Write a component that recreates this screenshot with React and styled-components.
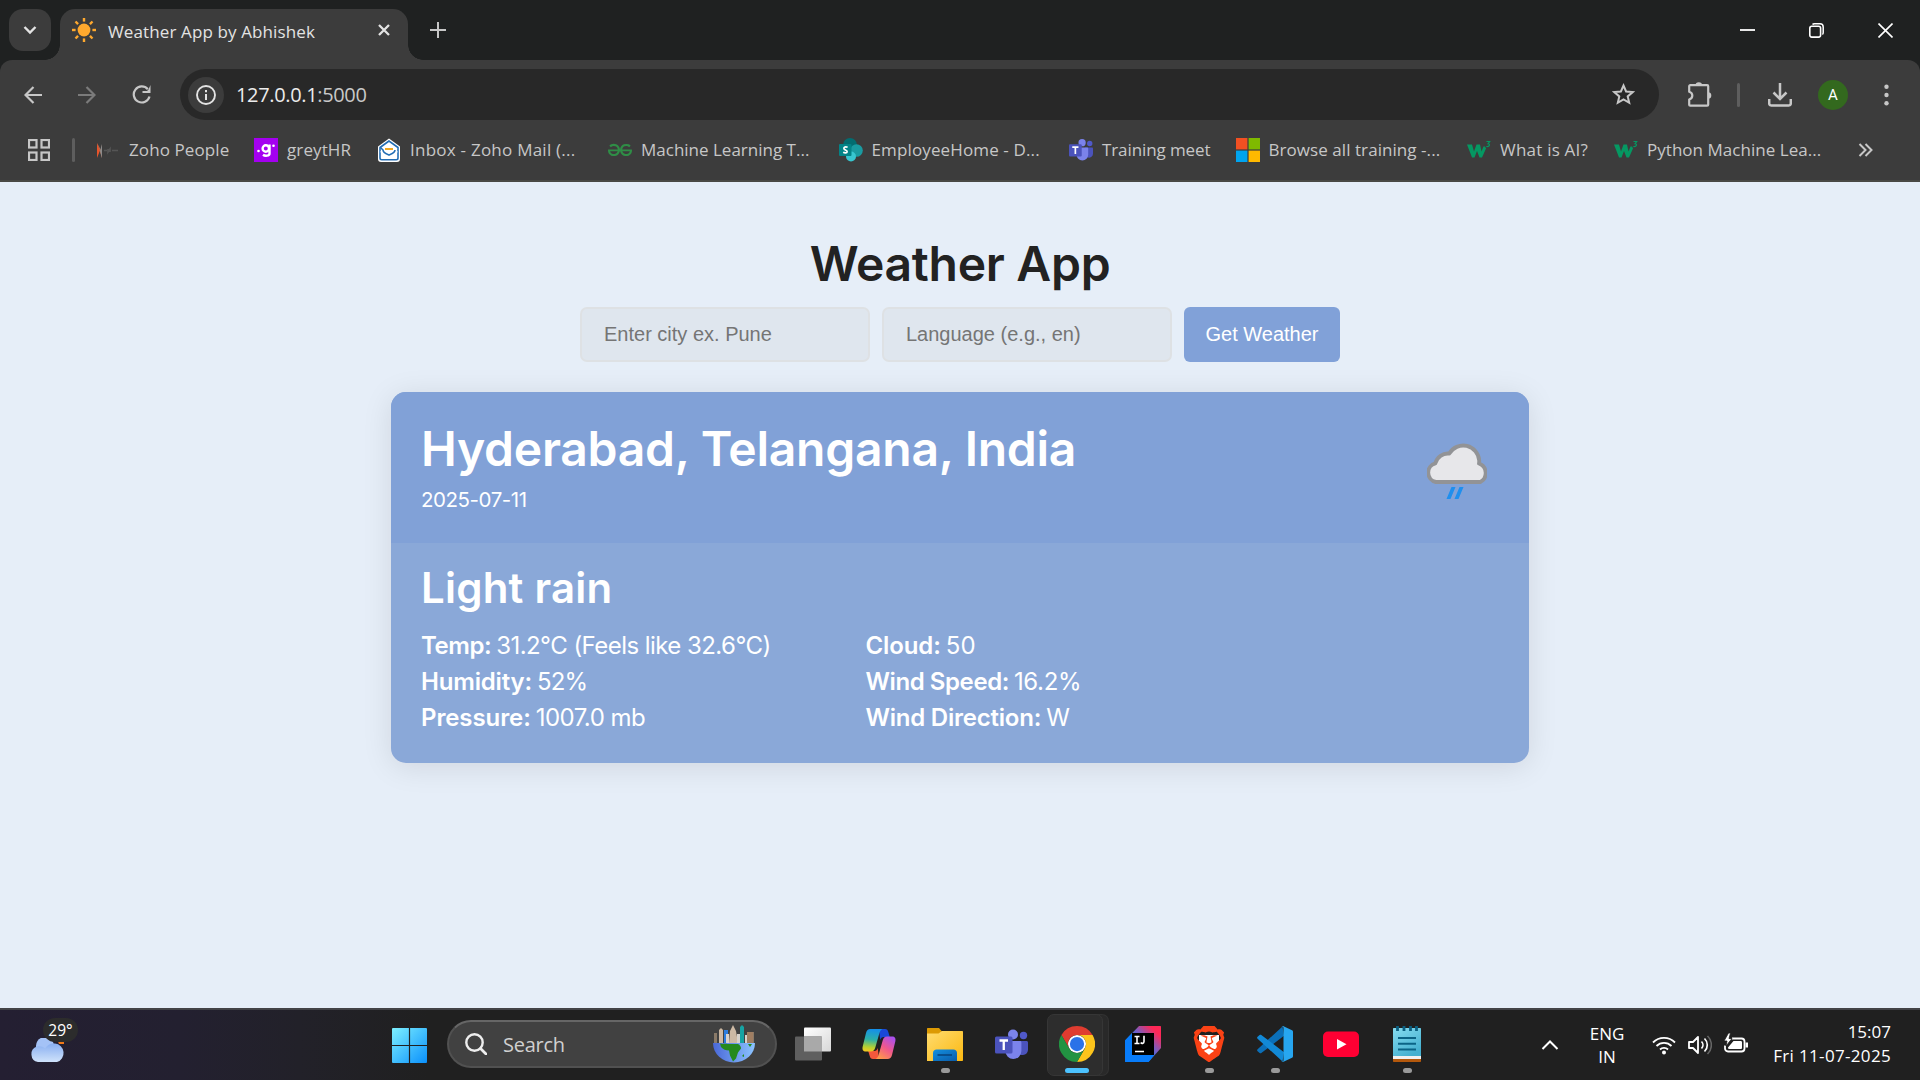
import React from "react";
import styled, { createGlobalStyle } from "styled-components";
import { SiBrave, SiGeeksforgeeks } from "react-icons/si";

const Global = createGlobalStyle`
  * { box-sizing: border-box; }
  body { margin: 0; background: #e6eef8; overflow: hidden; }
`;
const ui = `"Open Sans", "Noto Sans", sans-serif`;

const Screen = styled.div`
  width: 1920px; height: 1080px; display: flex; flex-direction: column;
  font-family: ${ui}; overflow: hidden;
`;
const Text = styled.span`
  white-space: pre; letter-spacing: ${(p) => p.$ls || 0}px;
`;

/* ---------- browser ---------- */
const TabStrip = styled.div`
  height: 60px; background: #1f2121; display: flex; align-items: flex-end; flex: none;
`;
const TabSearch = styled.div`
  width: 42px; height: 42px; margin: 0 9px 9px; border-radius: 14px; background: #3c3c3c;
  display: flex; align-items: center; justify-content: center;
`;
const Tab = styled.div`
  position: relative; width: 348px; height: 51px; background: #3c3c3c; border-radius: 15px 15px 0 0;
  display: flex; align-items: center; padding: 0 17px 9px 12px; color: #e3e3e3; font-size: 17px;
  &::before, &::after {
    content: ""; position: absolute; bottom: 0; width: 15px; height: 15px;
  }
  &::before { left: -15px; background: radial-gradient(circle at 0 0, transparent 14.5px, #3c3c3c 15px); }
  &::after { right: -15px; background: radial-gradient(circle at 100% 0, transparent 14.5px, #3c3c3c 15px); }
  ${Text} { margin-left: 12px; flex: 1; line-height: 24px; padding-top: 3px; }
`;
const NewTab = styled.div`
  height: 60px; display: flex; align-items: center; flex: 1; padding-left: 22px;
`;
const WindowButton = styled.div`
  width: 69px; height: 60px; display: flex; align-items: center; justify-content: center;
`;
const Chrome = styled.div`
  background: #1f2121; height: 122px; flex: none;
`;
const ChromeInner = styled.div`
  height: 122px; background: #3c3c3c; border-radius: 12px 12px 0 0; border-bottom: 2px solid #494945;
`;
const Toolbar = styled.div`
  height: 69px; padding: 9px 0; display: flex; align-items: center;
`;
const NavButton = styled.div`
  width: 54px; height: 51px; display: flex; align-items: center; justify-content: center;
  &:first-child { margin-left: 6px; }
`;
const AddressBar = styled.div`
  margin-left: 12px; width: 1479px; height: 51px; border-radius: 26px; background: #282828;
  display: flex; align-items: center; padding: 0 24px 0 8px; color: #ececec; font-size: 20px;
  ${Text} { line-height: 28px; }
`;
const Url = styled.div`
  flex: 1; margin-left: 12px; display: flex; color: #ececec;
  ${Text} + ${Text} { color: #c9c9c9; }
`;
const InfoCircle = styled.div`
  width: 36px; height: 36px; border-radius: 50%; background: #3c3c3c;
  display: flex; align-items: center; justify-content: center;
`;
const Tools = styled.div`
  display: flex; align-items: center; padding-left: 27px;
`;
const Divider = styled.div`
  width: 3px; height: 24px; border-radius: 2px; background: #5e5e5e; margin: ${(p) => p.$m};
`;
const Avatar = styled.div`
  width: 30px; height: 30px; border-radius: 50%; background: #33691e; color: #fff; margin: 0 36px 0 26px;
  font: 15px/31px Roboto, sans-serif; text-align: center;
`;
const Bookmarks = styled.div`
  height: 51px; padding: 0 0 9px 28px; display: flex; align-items: center;
`;
const Bookmark = styled.div`
  width: ${(p) => p.$w}px; display: flex; align-items: center; gap: 9px; color: #c7c7c7; font-size: 17px; line-height: 24px;
  svg { flex: none; }
`;

/* ---------- weather page ---------- */
const Page = styled.main`
  height: 826px; flex: none; background: #e6eef8; padding-top: 49px; display: flex; flex-direction: column; align-items: center;
  font-family: Inter, "Open Sans", sans-serif;
`;
const Title = styled.h1`
  margin: 0 0 11px; font-size: 48px; line-height: 65px; font-weight: 600; color: #222; letter-spacing: -0.28px;
`;
const Form = styled.div`
  display: flex; gap: 12px;
`;
const Field = styled.input`
  width: 290px; height: 55px; border: 2px solid #dee1e4; border-radius: 7px; background: #dfe6ee; padding: 0 22px;
  font: 20px "Liberation Sans", Arial, sans-serif; outline: 0;
  &::placeholder { color: #757575; opacity: 1; }
`;
const Submit = styled.button`
  width: 156px; height: 55px; border: 0; padding: 0; border-radius: 6px; background: #81a1d8; color: #fff;
  font: 20px "Liberation Sans", Arial, sans-serif;
`;
const Card = styled.section`
  margin-top: 30px; width: 1138px; border-radius: 15px; overflow: hidden; color: #fff; background: #8aa8d8; flex: none;
  box-shadow: 0 4px 30px rgba(0, 0, 0, 0.1);
`;
const CardHead = styled.div`
  height: 151px; padding: 24px 42px 0 30px; background: #81a1d7; display: flex; justify-content: space-between;
`;
const City = styled.h2`
  margin: 0; font-size: 48px; line-height: 65px; font-weight: 600; letter-spacing: -0.25px;
`;
const DateLine = styled.div`
  font-size: 20.5px; line-height: 28px; margin-top: 5px; letter-spacing: -0.45px;
`;
const CardBody = styled.div`
  height: 220px; padding: 16px 30px 0;
`;
const Condition = styled.h3`
  margin: 0 0 12px; font-size: 42px; line-height: 57px; font-weight: 600; letter-spacing: 0.22px;
`;
const Stats = styled.div`
  display: grid; grid-template-columns: 444.500px 1fr; grid-auto-rows: 36px;
`;
const Stat = styled.div`
  font-size: 24px; line-height: 36px; display: flex; gap: 5px;
  b { font-weight: 600; letter-spacing: ${(p) => p.$bls || 0}px; }
  span { font-weight: 375; letter-spacing: ${(p) => p.$ls || 0}px; }
`;

/* ---------- taskbar ---------- */
const Taskbar = styled.footer`
  height: 72px; flex: none; border-top: 2px solid #434347; display: flex; align-items: center;
  background: linear-gradient(90deg, #241f32 0, #232030 180px, #222129 300px, #202020 430px);
`;
const Widget = styled.div`
  position: relative; width: 362px; height: 70px; padding: 28px 0 0 30px;
`;
const Badge = styled.div`
  position: absolute; left: 43px; top: 8px; width: 35px; height: 24px; border-radius: 12px; background: #2c2c2c; color: #fff;
  font-size: 15.5px; line-height: 24px; text-align: center;
`;
const StartBox = styled.div`
  width: 85px; padding-left: 30px; display: flex;
`;
const SearchBox = styled.div`
  width: 330px; height: 48px; margin-top: -2px; border-radius: 24px; background: #414141; border: 2px solid #515151; border-top-color: #666;
  display: flex; align-items: center; padding: 0 20px 0 16px; color: #d0d0d0; font-size: 20px;
  ${Text} { margin-left: 16px; flex: 1; line-height: 28px; padding-top: 1px; }
`;
const Apps = styled.div`
  display: flex; padding-left: 6px; margin-top: -2px;
`;
const AppBtn = styled.div`
  position: relative; width: 60px; height: 60px; margin-right: 6px; border-radius: 7px; display: flex; align-items: center; justify-content: center;
  &::before {
    content: ""; display: ${(p) => (p.$active ? "block" : "none")}; position: absolute; left: 0; top: 0; width: 54px; height: 60px;
    border-radius: 7px; background: #2d2d2d; border: 1px solid #363636; box-shadow: 6px 0 0 -1px #292929, 6px 0 0 0 #323232;
  }
  &::after {
    content: ""; display: ${(p) => (p.$mark ? "block" : "none")}; position: absolute; bottom: 1px; left: 50%; margin-left: ${(p) => (p.$active ? -12 : -4.5)}px;
    width: ${(p) => (p.$active ? 24 : 9)}px; height: 5px; border-radius: 3px; background: ${(p) => (p.$active ? "#4cc2ff" : "#9a9a9a")};
  }
  svg { position: relative; }
`;
const Tray = styled.div`
  flex: 1; display: flex; align-items: center; justify-content: flex-end; color: #fff; padding-right: 29px; font-size: 17px; line-height: 23px;
`;
const Lang = styled.div`
  width: 50px; margin: 0 20px 0 23px; display: flex; flex-direction: column; align-items: center;
`;
const TrayIcons = styled.div`
  display: flex; gap: 12px; width: 120px;
`;
const Clock = styled.div`
  width: 119px; display: flex; flex-direction: column; align-items: flex-end; line-height: 24px; margin-top: -3px;
`;

/* ---------- drawings ---------- */
const Svg = ({ w, h = w, vb, children, ...r }) => (
  <svg width={w} height={h} viewBox={vb || `0 0 ${w} ${h}`} fill="none" {...r}>{children}</svg>
);
const Sun = () => (
  <Svg w={24}>
    <circle cx="12" cy="12" r="6.4" fill="#ffa92e" />
    {[0, 45, 90, 135, 180, 225, 270, 315].map((a) => (
      <rect key={a} x="10.8" y="0" width="2.4" height="3.6" fill="#ffa92e" transform={`rotate(${a} 12 12)`} />
    ))}
  </Svg>
);
const Teams = ({ s }) => (
  <Svg w={s} vb="0 0 33 33">
    <circle cx="28.500" cy="7.500" r="3.700" fill="#5059c9" />
    <path d="M22 13h9.500c.9 0 1.500.6 1.500 1.500v7a5.500 5.500 0 0 1-8 5z" fill="#4b53bc" />
    <circle cx="18" cy="6.500" r="5" fill="#7b83eb" />
    <path d="M12 13h13c.8 0 1.400.6 1.400 1.400v8.600a8 8 0 0 1-16 0z" fill="#7b83eb" />
    <rect x="0" y="8.500" width="17.500" height="17" rx="1.500" fill="#4b53bc" />
    <path d="M4.500 12.500h8.500M8.750 12.500v9.500" stroke="#fff" strokeWidth="2.300" />
  </Svg>
);
const W3 = () => (
  <Svg w={24}>
    <path d="M0 6.500h5l2 7 2.500-7h3.500l1.500 7 2-5h1.500l1 2-4 9h-2.500l-2.500-6.500-2.500 6.500H5z" fill="#059862" />
    <path d="M19.500 3.500h3.200l-1.600 2.200c2 0 2 3.300-1.800 2.800" stroke="#059862" strokeWidth="1.200" />
  </Svg>
);
const bookmarks = [
  ["Zoho People", 158, 0.1, <Svg w={24}><path d="M1 5v15l3-7.500z" fill="#e8542a" /><path d="M1 5l4 7 1-5v13l-2-6z" fill="#b86a50" /><path d="M6 6v14l-2-7z" fill="#8b8b8b" /><path d="M8 12.500h3M12 11v3l2-3v3M16 12.500h6" stroke="#555" strokeWidth="1.600" /></Svg>],
  ["greytHR", 123, 0.1, <Svg w={24}><rect width="24" height="24" fill="#a400f0" /><circle cx="11.800" cy="10.500" r="3.200" stroke="#fff" strokeWidth="2.400" /><path d="M15.500 6.500v9.200c0 2.200-4.500 2.600-6.500 1" stroke="#fff" strokeWidth="2.400" /><circle cx="4.500" cy="13" r="1.300" fill="#fff" /><circle cx="19.500" cy="7.800" r="1.300" fill="#fff" /></Svg>],
  ["Inbox - Zoho Mail (...", 231, 0.24, <Svg w={24}><path d="M12 .5L1 8.500v12.500c0 2 1 3 3 3h16c2 0 3-1 3-3V8.500z" fill="#fff" /><path d="M12 3L3 9.500V20c0 1.200.5 1.700 1.700 1.700h14.600c1.200 0 1.700-.5 1.700-1.700V9.500z" stroke="#226db4" strokeWidth="1.600" /><path d="M3 14l4-3.500h10l4 3.500-9 4.500z" fill="#fff" /><path d="M8 11h8" stroke="#f0a820" strokeWidth="2" /><path d="M3.500 9.500L6 12c0 3 4 4.200 6 5 2-.8 6-2 6-5" stroke="#226db4" strokeWidth="1.600" /></Svg>],
  ["Machine Learning T...", 230.5, 0, <SiGeeksforgeeks size={24} color="#2f8d46" />],
  ["EmployeeHome - D...", 230.5, 0.13, <Svg w={24}><circle cx="11" cy="7" r="7" fill="#036c70" /><circle cx="17.500" cy="12.500" r="6.300" fill="#1a9ba1" /><circle cx="12" cy="18.500" r="5" fill="#37c6d0" /><rect x="0" y="6" width="12.500" height="12" rx="1" fill="#038387" /><path d="M8.600 9.300c-3-1.300-4.800.9-3 2.200 1.300.9 2.800.8 2.600 2.300-.3 1.400-2.600 1.300-4 .5" stroke="#fff" strokeWidth="1.600" /></Svg>],
  ["Training meet", 166.5, -0.1, <Teams s={24} />],
  ["Browse all training -...", 231.5, 0.06, <Svg w={24}><path fill="#f25022" d="M0 0h11.400v11.400H0z" /><path fill="#7fba00" d="M12.600 0H24v11.400H12.600z" /><path fill="#00a4ef" d="M0 12.600h11.400V24H0z" /><path fill="#ffb900" d="M12.600 12.600H24V24H12.600z" /></Svg>],
  ["What is AI?", 147, 0.22, <W3 />],
  ["Python Machine Lea...", 244, 0.03, <W3 />],
];
const GlyphSlot = styled.div`
  padding-top: 26px;
`;
const WeatherGlyph = () => (
  <Svg w={60}>
    <path d="M8.500 38.500a9 9 0 0 1-.5-17.500 12 12 0 0 1 13-9 15 15 0 0 1 28 6.500c0 1 0 2-.2 2.700A9.500 9.500 0 0 1 50 38.500z" transform="translate(-0.200 -1.200) scale(1.070)" fill="#e7e7ea" stroke="#929396" strokeWidth="3.600" strokeLinejoin="round" />
    <path d="M24.500 45h4l-5 12h-4zM32.500 45h4l-5 12h-4z" fill="#1f8fee" />
  </Svg>
);
const Globe = () => (
  <Svg w={42} h={38}>
    <defs><linearGradient id="gl" x1="0" x2="1"><stop offset="0" stopColor="#4a68d8" /><stop offset="1" stopColor="#8cc4ff" /></linearGradient></defs>
    <path d="M1 8h3v10H1zM37 7h4v11h-4z" fill="#8a7a68" />
    <path d="M6 5l2-2 2 2v13H6zM17 6l3-6 3 6 2 12h-9z" fill="#cdb9a4" />
    <path d="M11 5h4v13h-4z" fill="#2b7de0" /><path d="M13 9h3v9h-3zM24 9h3v9h-3zM32 10h3v8h-3z" fill="#d8d2cc" />
    <path d="M27 2l2-2 2 2v16h-4z" fill="#16a3a3" /><path d="M34 7h6v11h-6z" fill="#a07e62" />
    <path d="M0 18h42a21 19.500 0 0 1-42 0z" fill="url(#gl)" />
    <path d="M7 18.500c3 1 5 0 7 .5h11c2 1 3 2.500 3 4.500l-3 4-2 6-3 3-3-6-1-5c-3 0-6-1-8-3.500zM35 19h4l-2 3zM29 31l2-2v3z" fill="#258a1d" />
  </Svg>
);
const Brave = () => (
  <Svg w={36}>
    <path d="M8 9h20v18l-10 6-10-6z" fill="#fff" />
    <SiBrave x={0} y={0} size={36} color="#fb4215" />
  </Svg>
);
const apps = [
  [<Svg w={36}><defs><linearGradient id="tv" x2="1" y2="1"><stop stopColor="#fff" /><stop offset="1" stopColor="#d8d8d8" /></linearGradient></defs><rect x="9" y="1.500" width="27" height="24" rx="1" fill="url(#tv)" /><rect x="0" y="10.500" width="27" height="24" rx="1" fill="#5f5f5f" /><path d="M9 10.500h18v15H9z" fill="#a9a9a9" /></Svg>],
  [<Svg w={36}><defs>
    <linearGradient id="c1" x1=".3" y1="0" x2=".2" y2="1"><stop stopColor="#1590e8" /><stop offset=".45" stopColor="#2cb0a8" /><stop offset=".8" stopColor="#b8d030" /><stop offset="1" stopColor="#f8c820" /></linearGradient>
    <linearGradient id="c2" x1=".8" y1="0" x2=".2" y2="1"><stop stopColor="#a850f0" /><stop offset=".5" stopColor="#f0588c" /><stop offset="1" stopColor="#ff9c48" /></linearGradient></defs>
    <path d="M18 3h6c2 0 2.800 1.200 3.300 3l1.500 5h-6c-2 0-3 1-3.600 3z" fill="#1a48d8" />
    <path d="M18 33h-6c-2 0-2.800-1.200-3.300-3l-1.500-5h6c2 0 3-1 3.600-3z" fill="#f4583c" />
    <path d="M9.500 3h12c-2 1-2.500 2-3.200 4.500l-4 14c-.8 2.500-1.800 4-4.500 4H5c-3 0-4-2-3.300-5L5 7c.7-2.500 2-4 4.500-4z" fill="url(#c1)" />
    <path d="M26.500 33h-12c2-1 2.500-2 3.200-4.500l4-14c.8-2.500 1.800-4 4.500-4H31c3 0 4 2 3.300 5L31 29c-.7 2.500-2 4-4.500 4z" fill="url(#c2)" /></Svg>],
  [<Svg w={36}><defs><linearGradient id="fo" x2="1" y2="1"><stop stopColor="#ffdc70" /><stop offset="1" stopColor="#fbb810" /></linearGradient><linearGradient id="fb" x2="1" y2="1"><stop stopColor="#1490df" /><stop offset="1" stopColor="#0a5cab" /></linearGradient></defs><path d="M0 3c0-.6.400-1 1-1h11l3 3.500-3 3.500H0z" fill="#dc9a04" /><path d="M0 7.500h11.500L15 5h20c.6 0 1 .4 1 1v28c0 .6-.4 1-1 1H0z" fill="url(#fo)" /><path d="M6 35V27c0-2 1.500-3.500 3.500-3.500h17c2 0 3.500 1.500 3.500 3.500v8z" fill="url(#fb)" /><path d="M10.500 29h14.500" stroke="#08447e" strokeWidth="1.600" /></Svg>, 1],
  [<Teams s={33} />],
  [<Svg w={36} vb="0 0 48 48">
    <circle cx="24" cy="24" r="12" fill="#fff" />
    <path d="M24 12H44.781a23.994 23.994 0 0 0-41.564.003L13.608 30l.009-.002A11.985 11.985 0 0 1 24 12Z" fill="#df3c30" />
    <path d="M34.391 30.003 24.001 48A23.994 23.994 0 0 0 44.780 12.003H23.999l-.003.009A11.985 11.985 0 0 1 34.391 30.003Z" fill="#fcc41c" />
    <path d="M13.609 30.003 3.218 12.006A23.994 23.994 0 0 0 24.003 48L34.393 30.003l-.007-.007a11.985 11.985 0 0 1-20.778.007Z" fill="#229342" />
    <circle cx="24" cy="24" r="9.500" fill="#2a72e8" /></Svg>, 1, 1],
  [<Svg w={36}><defs><linearGradient id="ij" x1="0" y1="1" x2="1" y2="0"><stop offset=".35" stopColor="#087cfa" /><stop offset=".6" stopColor="#7a5cc0" /><stop offset=".85" stopColor="#fe2857" /></linearGradient></defs>
    <path d="M14 0h21c.6 0 1 .4 1 1v21L23.500 36H1c-.6 0-1-.4-1-1V14.500z" fill="url(#ij)" /><path d="M0 14.500L7 7v22h22l-5.500 7H1c-.6 0-1-.4-1-1z" fill="#087cfa" /><rect x="7" y="7" width="22" height="22" fill="#000" /><path d="M9.500 10.500h5M12 10.500v7M9.500 17.500h5M19 9.800v5.700c0 2.300-2.500 2.300-3.200 1M10 25.500h9" stroke="#fff" strokeWidth="1.600" /></Svg>],
  [<Brave />, 1],
  [<Svg w={36}><path d="M25.500.5L.6 23.300a1.300 1.300 0 0 0 0 1.900l2 1.800c.5.400 1.200.4 1.700 0L27 9.800z" fill="#0b6fb8" /><path d="M25.500 35.500L.6 12.700a1.300 1.300 0 0 1 0-1.900l2-1.800c.5-.4 1.200-.4 1.700 0L27 26.200z" fill="#1289d6" /><path d="M26.500.2L35 4.300c.6.300 1 .8 1 1.500v24.400c0 .7-.4 1.200-1 1.500l-8.500 4.100c-.7.300-1.500.2-2-.4 1 .5 2-.1 2-1.200V1.800c0-1.100-1-1.700-2-1.200.5-.6 1.300-.7 2-.4z" fill="#27a6f0" /></Svg>, 1],
  [<Svg w={36}><rect x="0" y="5.500" width="36" height="25.500" rx="5" fill="#ff0033" /><path d="M14 13v10.500l9.500-5.200z" fill="#fff" /></Svg>],
  [<Svg w={36}><defs><linearGradient id="np" x2=".6" y2="1"><stop stopColor="#86dcf0" /><stop offset="1" stopColor="#44b0d0" /></linearGradient></defs><path d="M4 30h28v5c0 .6-.4 1-1 1H5c-.6 0-1-.4-1-1z" fill="#b4580c" /><path d="M4 29h28v4H4z" fill="#f0f0f0" /><path d="M5 2h26c.6 0 1 .4 1 1v27H4V3c0-.6.400-1 1-1z" fill="url(#np)" /><path d="M9 12h18M9 17.700h18M9 23.500h18" stroke="#0b6486" strokeWidth="2" /><path d="M8.500 0v5M15 0v5M21.500 0v5M27.500 0v5" stroke="#0b5f80" strokeWidth="2.800" /></Svg>, 1],
];
const stats = [
  ["Temp:", "31.2°C (Feels like 32.6°C)", -0.45, -0.55], ["Cloud:", "50", -0.1, 0],
  ["Humidity:", "52%", -0.17, -0.9], ["Wind Speed:", "16.2%", -0.42, -0.35],
  ["Pressure:", "1007.0 mb", -0.1, -0.5], ["Wind Direction:", "W", -0.22, 0],
];
const g = "#c7c7c7";

export default function App() {
  return (
    <Screen>
      <Global />
      <TabStrip>
        <TabSearch><Svg w={14} h={10}><path d="M1.500 2l5.500 5.500L12.500 2" stroke="#e3e3e3" strokeWidth="2.400" /></Svg></TabSearch>
        <Tab>
          <Sun />
          <Text $ls={0.12}>Weather App by Abhishek</Text>
          <Svg w={14}><path d="M2 2l10 10M12 2L2 12" stroke="#e3e3e3" strokeWidth="2.300" /></Svg>
        </Tab>
        <NewTab><Svg w={16}><path d="M8 0v16M0 8h16" stroke={g} strokeWidth="2" /></Svg></NewTab>
        <WindowButton><Svg w={15}><path d="M0 7h15" stroke="#fff" strokeWidth="1.800" /></Svg></WindowButton>
        <WindowButton><Svg w={15}><rect x=".8" y="3.300" width="10.800" height="10.800" rx="2" stroke="#fff" strokeWidth="1.600" /><path d="M3.500 1.500C4 .9 4.500.8 5.500.8h5.500a3.200 3.200 0 0 1 3.200 3.200v5.500c0 1-.2 1.600-.8 2" stroke="#fff" strokeWidth="1.500" /></Svg></WindowButton>
        <WindowButton><Svg w={15}><path d="M.5.5l14 14M14.500.5l-14 14" stroke="#fff" strokeWidth="1.600" /></Svg></WindowButton>
      </TabStrip>
      <Chrome>
        <ChromeInner>
          <Toolbar>
            <NavButton><Svg w={18}><path d="M18 9H1.500M9.500 1L1.500 9l8 8" stroke={g} strokeWidth="2.200" /></Svg></NavButton>
            <NavButton><Svg w={18}><path d="M0 9h16.500M8.500 1l8 8-8 8" stroke="#7b7b7b" strokeWidth="2.200" /></Svg></NavButton>
            <NavButton><Svg w={19}><path d="M15.800 4.200A8 8 0 1 0 17.500 11.500" stroke={g} strokeWidth="2.200" /><path d="M18.500 0v8h-8V6h4.500l1.300-1.300z" fill={g} /></Svg></NavButton>
            <AddressBar>
              <InfoCircle><Svg w={20}><circle cx="10" cy="10" r="9" stroke="#e3e3e3" strokeWidth="1.900" /><path d="M10 9v6M10 5v2.200" stroke="#e3e3e3" strokeWidth="2" /></Svg></InfoCircle>
              <Url><Text $ls={-0.35}>127.0.0.1</Text><Text $ls={-0.35}>:5000</Text></Url>
              <Svg w={23}><path d="M11.500 2.500l2.600 6 6.600.6-5 4.300 1.500 6.400-5.700-3.400-5.700 3.400 1.500-6.400-5-4.300 6.600-.6z" stroke={g} strokeWidth="2" /></Svg>
            </AddressBar>
            <Tools>
              <Svg w={27}>
                <path d="M3.200 5.200a1 1 0 0 1 1-1h17a1 1 0 0 1 1 1v18.500a1 1 0 0 1-1 1h-17a1 1 0 0 1-1-1v-5.200a4 4 0 0 0 0-7.800z" stroke={g} strokeWidth="2.200" strokeLinejoin="round" />
                <path d="M9.500 4.500a3.300 3.300 0 0 1 6.600 0zM22 11.200a3.300 3.300 0 0 1 0 6.600z" fill={g} />
              </Svg>
              <Divider $m="0 28px 0 24px" />
              <Svg w={24}><path d="M12 0v15M5.500 9.500L12 16l6.500-6.500M1.200 16v4.500c0 1.200.8 2 2 2h17.600c1.200 0 2-.8 2-2V16" stroke={g} strokeWidth="2.500" /></Svg>
              <Avatar>A</Avatar>
              <Svg w={5} h={22}><circle cx="2.500" cy="2.800" r="2.200" fill={g} /><circle cx="2.500" cy="11" r="2.200" fill={g} /><circle cx="2.500" cy="19.200" r="2.200" fill={g} /></Svg>
            </Tools>
          </Toolbar>
          <Bookmarks>
            <Svg w={22}>{[[1, 1], [13.500, 1], [1, 13.500], [13.500, 13.500]].map(([x, y], i) => <rect key={i} x={x} y={y} width="7.500" height="7.500" stroke={g} strokeWidth="2.200" />)}</Svg>
            <Divider $m="0 21px 0 22px" />
            {bookmarks.map(([t, w, ls, ic]) => <Bookmark key={t} $w={w}>{ic}<Text $ls={ls}>{t}</Text></Bookmark>)}
            <Svg w={15} h={14}><path d="M1.500 1l6 6-6 6M7.500 1l6 6-6 6" stroke={g} strokeWidth="2" /></Svg>
          </Bookmarks>
        </ChromeInner>
      </Chrome>
      <Page>
        <Title>Weather App</Title>
        <Form>
          <Field placeholder="Enter city ex. Pune" />
          <Field placeholder="Language (e.g., en)" />
          <Submit>Get Weather</Submit>
        </Form>
        <Card>
          <CardHead>
            <div>
              <City>Hyderabad, Telangana, India</City>
              <DateLine>2025-07-11</DateLine>
            </div>
            <GlyphSlot><WeatherGlyph /></GlyphSlot>
          </CardHead>
          <CardBody>
            <Condition>Light rain</Condition>
            <Stats>{stats.map(([k, v, b, l]) => <Stat key={k} $bls={b} $ls={l}><b>{k}</b><span>{v}</span></Stat>)}</Stats>
          </CardBody>
        </Card>
      </Page>
      <Taskbar>
        <Widget>
          <Svg w={36} h={24} vb="0 1 36 24"><defs><linearGradient id="cl" x2="0" y2="1"><stop stopColor="#88aef0" /><stop offset="1" stopColor="#cfe2fb" /></linearGradient></defs><path d="M27 2h7v5h-5z" fill="#f07818" /><path d="M6 10a9 9 0 0 1 17-5l3 8H7z" fill="#a4c2f6" /><path d="M8 25a8 8 0 0 1-1-15.500c3-.8 6 0 8 2C17 8 21 6 25 6.500A9.500 9.500 0 0 1 27 25z" fill="url(#cl)" /></Svg>
          <Badge>29°</Badge>
        </Widget>
        <StartBox><Svg w={35}><defs><linearGradient id="st" gradientUnits="userSpaceOnUse" x1="0" y1="0" x2="35" y2="35"><stop stopColor="#7df0ff" /><stop offset="1" stopColor="#0a90fc" /></linearGradient></defs><path d="M1 0h15.900v16.900H0V1a1 1 0 0 1 1-1zM18.100 0H34a1 1 0 0 1 1 1v15.900H18.100zM0 18.100h16.900V35H1a1 1 0 0 1-1-1zM18.100 18.100H35V34a1 1 0 0 1-1 1H18.100z" fill="url(#st)" /></Svg></StartBox>
        <SearchBox>
          <Svg w={22}><circle cx="9.500" cy="9.500" r="8.200" stroke="#eee" strokeWidth="2.400" /><path d="M15.500 15.500l5.500 5.500" stroke="#eee" strokeWidth="2.800" strokeLinecap="round" /></Svg>
          <Text $ls={-0.25}>Search</Text>
          <Globe />
        </SearchBox>
        <Apps>{apps.map(([ic, mk, ac], i) => <AppBtn key={i} $mark={mk} $active={ac}>{ic}</AppBtn>)}</Apps>
        <Tray>
          <Svg w={18} h={12}><path d="M1.500 10L9 2.500l7.500 7.500" stroke="#fff" strokeWidth="2" /></Svg>
          <Lang><Text>ENG</Text><Text>IN</Text></Lang>
          <TrayIcons>
            <Svg w={24}><path d="M1 9.500a15.500 15.500 0 0 1 22 0M4.500 13a10.500 10.500 0 0 1 15 0M8 16.500a5.700 5.700 0 0 1 8 0" stroke="#fff" strokeWidth="1.800" /><circle cx="12" cy="19.500" r="2" fill="#fff" /></Svg>
            <Svg w={24}><path d="M1 9h4l5-5v16l-5-5H1z" stroke="#fff" strokeWidth="1.800" strokeLinejoin="round" /><path d="M13.500 8.500a5 5 0 0 1 0 7M16.500 5.500a9 9 0 0 1 0 13" stroke="#fff" strokeWidth="1.700" /><path d="M19.500 3a12.500 12.500 0 0 1 0 18" stroke="#666" strokeWidth="1.600" /></Svg>
            <Svg w={24}><path d="M8 5.500h9.500a3 3 0 0 1 3 3v7a3 3 0 0 1-3 3H4a3 3 0 0 1-3-3v-3" stroke="#fff" strokeWidth="1.800" /><path d="M21.500 9.500h2.500v5h-2.500z" fill="#fff" /><path d="M9.500 8h7c1 0 1.500.5 1.500 1.500v5c0 1-.5 1.500-1.500 1.500h-11c-1 0-1.500-.5-1.500-1.500z" fill="#fff" /><path d="M4.500 0L0 8h3L2 13l6-7.500H5L6.500 0z" fill="#fff" stroke="#202020" strokeWidth=".8" /></Svg>
          </TrayIcons>
          <Clock><Text>15:07</Text><Text $ls={0.33}>Fri 11-07-2025</Text></Clock>
        </Tray>
      </Taskbar>
    </Screen>
  );
}
